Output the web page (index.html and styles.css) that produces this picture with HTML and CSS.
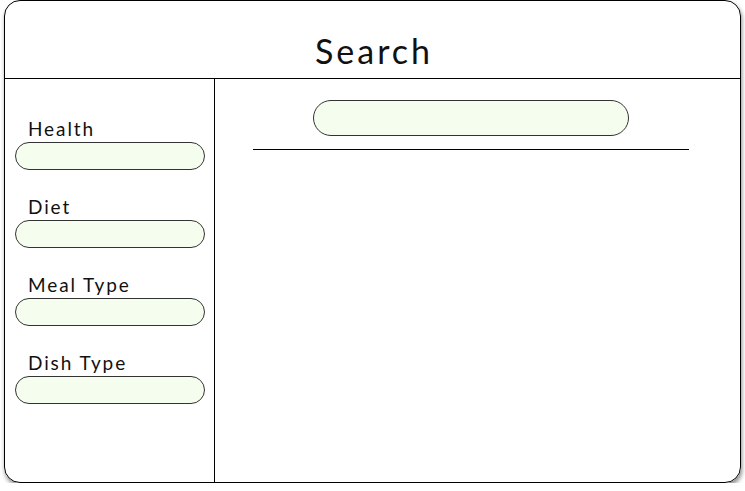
FILE: index.html
```html
<!DOCTYPE html>
<html>
<head>
<meta charset="utf-8">
<link rel="stylesheet" href="styles.css">
</head>
<body>
<div class="card">
  <header class="head"><h1 class="title">Search</h1></header>
  <div class="body">
    <aside class="side">
      <div class="field"><label class="lbl">Health</label><div class="pill"></div></div>
      <div class="field"><label class="lbl">Diet</label><div class="pill"></div></div>
      <div class="field"><label class="lbl">Meal Type</label><div class="pill"></div></div>
      <div class="field"><label class="lbl">Dish Type</label><div class="pill"></div></div>
    </aside>
    <main class="main">
      <div class="search"></div>
      <div class="rule"></div>
    </main>
  </div>
</div>
</body>
</html>
```
FILE: styles.css
```css
html, body { margin: 0; padding: 0; background: #fff; }
body { font-family: Lato, "Noto Sans", sans-serif; color: #111; }
.card {
  box-sizing: border-box;
  margin-left: 4px;
  width: 737px;
  height: 483px;
  border: 1px solid #000;
  border-radius: 16px;
  box-shadow: 1px 3px 4px rgba(0,0,0,0.45);
  display: flex;
  flex-direction: column;
  overflow: hidden;
}
.head {
  height: 77px;
  border-bottom: 1px solid #000;
  display: flex;
  justify-content: center;
  align-items: flex-end;
}
.title {
  margin: 0 0 7px 3px;
  font-weight: 400;
  font-size: 34px;
  line-height: 40px;
  letter-spacing: 3px;
}
.body { flex: 1; display: flex; }
.side {
  width: 209px;
  border-right: 1px solid #000;
  padding-top: 39px;
  display: flex;
  flex-direction: column;
  gap: 26px;
}
.field { display: flex; flex-direction: column; }
.lbl {
  display: block;
  height: 22px;
  line-height: 22px;
  font-size: 19px;
  padding-left: 23px;
  margin-bottom: 2px;
  letter-spacing: 1.9px;
}
.pill {
  box-sizing: border-box;
  margin-left: 10px;
  width: 190px;
  height: 28px;
  border: 1px solid #333;
  border-radius: 14px;
  background: #f4fdee;
}
.main { flex: 1; padding-top: 21px; }
.search {
  box-sizing: border-box;
  margin-left: 98px;
  width: 316px;
  height: 36px;
  border: 1px solid #333;
  border-radius: 18px;
  background: #f4fdee;
}
.rule {
  margin-top: 13px;
  margin-left: 38px;
  width: 436px;
  height: 1px;
  background: #000;
}
```
